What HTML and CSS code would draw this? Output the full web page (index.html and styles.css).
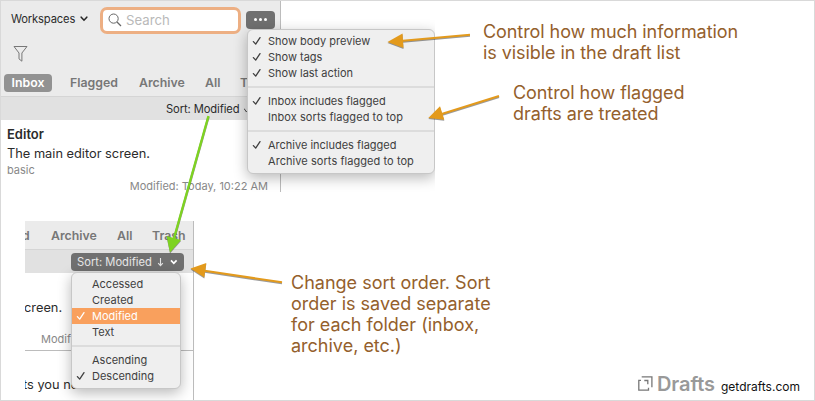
FILE: index.html
```html
<!DOCTYPE html>
<html lang="en">
<head>
<meta charset="utf-8">
<title>Draft list options</title>
<link rel="stylesheet" href="styles.css">
</head>
<body>
<svg class="defs" width="0" height="0"><symbol id="check" viewBox="0 0 10 10"><path d="M1.4 5.6 3.7 8.1 8 1.6" fill="none" stroke="currentColor" stroke-width="1.3" stroke-linecap="round" stroke-linejoin="round"/></symbol></svg>
<main class="canvas">
  <section class="shot shot-list">
    <div class="pane">
      <header class="toolbar">
        <span class="workspaces">Workspaces</span>
        <svg class="chevron" width="8" height="6" viewBox="0 0 8 6"><path d="M1.2 1.2 4 4.2 6.8 1.2" fill="none" stroke="#262626" stroke-width="1.6" stroke-linecap="round"/></svg>
        <div class="search"><svg width="14" height="14" viewBox="0 0 14 14" fill="none" stroke="#666"><circle cx="5.6" cy="5.6" r="4.6"/><path d="m9 9 4 4" stroke-width="1.3"/></svg><span>Search</span></div>
        <span class="more"><i></i><i></i><i></i></span>
      </header>
      <div class="filter"><svg width="15" height="18" viewBox="0 0 15 18"><path d="M1 1.5h13L8.9 8v8.2L6 13.9V8Z" fill="none" stroke="#777"/></svg></div>
      <nav class="tabs"><b class="active">Inbox</b><b class="t-flagged">Flagged</b><b class="t-archive">Archive</b><b class="t-all">All</b><b class="t-trash">Trash</b></nav>
      <div class="sortbar"><span>Sort: Modified</span><svg width="6" height="8" viewBox="0 0 6 8"><path d="M0 3.5 2.5 7 5 3.5" fill="none" stroke="#444"/></svg></div>
      <article class="draft"><h2>Editor</h2><p class="preview">The main editor screen.</p><p class="tag">basic</p><p class="date">Modified: Today, 10:22 AM</p></article>
    </div>
    <div class="menu menu-display">
      <div class="item"><svg><use href="#check"/></svg><span>Show body preview</span></div>
      <div class="item"><svg><use href="#check"/></svg><span>Show tags</span></div>
      <div class="item"><svg><use href="#check"/></svg><span>Show last action</span></div>
      <hr>
      <div class="item"><svg><use href="#check"/></svg><span>Inbox includes flagged</span></div>
      <div class="item"><span class="wide">Inbox sorts flagged to top</span></div>
      <hr>
      <div class="item"><svg><use href="#check"/></svg><span>Archive includes flagged</span></div>
      <div class="item"><span class="wide">Archive sorts flagged to top</span></div>
    </div>
  </section>

  <section class="shot shot-sort">
    <div class="pane">
      <nav class="tabs"><b class="cut">d</b><b class="t-archive">Archive</b><b class="t-all">All</b><b class="t-trash">Trash</b></nav>
      <div class="sortbar"><div class="sort-button"><span>Sort: Modified</span><svg width="24" height="12" viewBox="0 0 24 12" fill="none" stroke="#e4e4e4"><path d="M5.5 2v7.5M3.2 7.2l2.3 2.5 2.3-2.5" stroke-width="1.1"/><path d="m16 4.4 2.8 2.9 2.8-2.9" stroke="#fff" stroke-width="1.7"/></svg></div></div>
      <article class="under under-top"><p class="preview">creen.</p><p class="date">Modified</p></article>
      <article class="under"><p class="preview">ts you need.</p></article>
    </div>
    <div class="menu menu-sort">
      <div class="item"><span>Accessed</span></div>
      <div class="item"><span>Created</span></div>
      <div class="item selected"><svg><use href="#check"/></svg><span>Modified</span></div>
      <div class="item"><span>Text</span></div>
      <hr>
      <div class="item"><span>Ascending</span></div>
      <div class="item"><svg><use href="#check"/></svg><span>Descending</span></div>
    </div>
  </section>

  <p class="note note-info">Control how much information<br>is visible in the draft list</p>
  <p class="note note-flag">Control how flagged<br>drafts are treated</p>
  <p class="note note-sort">Change sort order. Sort<br>order is saved separate<br>for each folder (inbox,<br>archive, etc.)</p>

  <svg class="arrows" width="815" height="401" viewBox="0 0 815 401">
    <g stroke="#e39a1c" fill="#e39a1c" stroke-width="2">
      <path d="M470 34.8 400 41"/><path d="m387.5 42 15-8.5 1 14.5Z" stroke="none"/>
      <path d="M499 96 440 114.5"/><path d="m428.3 118 11.7-11.8 4.3 13.5Z" stroke="none"/>
      <path d="M282 282.3 203 270.5"/><path d="m190.5 268.5 15.8-5.5-2 14.6Z" stroke="none"/>
    </g>
    <path d="M208.5 116 173.5 240" stroke="#7ed321" stroke-width="2.4"/><path d="m170 252.5-3.4-16.5 14.4 4Z" fill="#7ed321"/>
  </svg>

  <footer class="brand"><svg width="15" height="15" viewBox="0 0 15 15" fill="none" stroke="#777"><path d="M3.7.8h10.2v10.4M6.3 4.5h3.5v3.7" stroke-width="1.3"/><path d="M3 4.3H.8v9.8h9.7v-2.4" stroke-width="1.3"/></svg><span class="name">Drafts</span><span class="site">getdrafts.com</span></footer>
</main>
</body>
</html>
```
FILE: styles.css
```css
* { box-sizing: border-box; }
body { margin: 0; background: #fff; font-family: Inter, "Liberation Sans", sans-serif; color: #2b2b2b; }
h2, p { margin: 0; }
.defs { position: absolute; }
.canvas { position: relative; width: 815px; height: 401px; border: 1px solid #d9d9d9; overflow: hidden; white-space: nowrap; }

.shot { position: absolute; overflow: hidden; background: #fff; }
.shot-list { left: 0; top: 0; width: 434px; height: 191px; }
.shot-sort { left: 24px; top: 220px; width: 180px; height: 179px; }
.pane { height: 100%; background: #fff; border-right: 1px solid #bcbcbc; overflow: hidden; }
.shot-list .pane { width: 280px; }
.shot-sort .pane { width: 169px; }

.toolbar { display: flex; align-items: center; height: 36px; background: #ebebeb; padding-left: 10px; }
.toolbar > * { flex: none; }
.workspaces { width: 63px; font-size: 11.2px; letter-spacing: -.15px; }
.chevron { margin-left: 6px; }
.search { display: flex; align-items: center; gap: 4px; width: 141px; height: 27px; margin: 2px 0 0 12px; padding-left: 5px; border: 3px solid #edaf83; border-radius: 7px; background: #fff; color: #b9b9b9; font-size: 13.2px; }
.more { display: flex; justify-content: center; align-items: center; gap: 2px; width: 29px; height: 18px; margin: 1px 0 0 5px; border-radius: 4px; background: #707070; }
.more i { width: 3px; height: 3px; border-radius: 50%; background: #fff; }
.filter { height: 34px; padding: 8px 0 0 12px; background: #ebebeb; }

.tabs { display: flex; align-items: center; background: #ebebeb; color: #777; font-size: 12.3px; border-bottom: 1px solid #d5d5d5; }
.shot-list .tabs { height: 26px; padding: 0 0 2px 3px; }
.tabs b { font-weight: 600; flex: none; }
.tabs .active { width: 48px; height: 18px; line-height: 18px; margin-right: 18px; text-align: center; color: #fff; background: #929292; border-radius: 4px; }
.t-flagged { width: 69px; }
.t-archive { width: 66px; }
.t-all { width: 35px; }
.sortbar { background: #e1e1e1; font-size: 11.2px; }
.shot-list .sortbar { display: flex; align-items: center; gap: 4px; height: 23px; padding-left: 165px; letter-spacing: -.1px; }
.draft { padding: 5px 12px 0 6px; }
.draft h2 { font-size: 13px; font-weight: 600; line-height: 19px; }
.preview { font-size: 12.8px; line-height: 18px; }
.draft .preview { line-height: 19px; }
.tag { color: #888; font-size: 11px; line-height: 15px; }
.date { color: #888; font-size: 11px; line-height: 17px; text-align: right; }

.menu { position: absolute; background: #efefef; border: 1px solid #c7c7c7; border-radius: 6px; box-shadow: 0 4px 14px rgba(0,0,0,.28); color: #404040; font-size: 11px; letter-spacing: -.01px; }
.menu-display { left: 246px; top: 28px; width: 188px; height: 145px; padding-top: 3px; }
.menu-sort { left: 46px; top: 51px; width: 110px; height: 117px; padding-top: 3px; }
.item { display: flex; align-items: center; height: 16px; padding-left: 20px; }
.item svg { width: 10px; height: 10px; margin-left: -16px; margin-right: 6px; }
.item .wide { letter-spacing: .06px; }
.menu hr { height: 2px; margin: 5px 0; border: 0; background: #dcdcdc; }
.selected { background: #f9a05d; color: #fff; }

.shot-sort .tabs { height: 29px; }
.shot-sort .cut { width: 29px; margin-left: -3px; }
.shot-sort .sortbar { height: 23px; padding: 3px 0 0 46px; }
.sort-button { display: flex; align-items: center; width: 113px; height: 18px; padding-left: 6px; border-radius: 4px; background: #707070; color: #e7e7e7; }
.sort-button svg { margin-left: 3px; }
.under-top { height: 78px; padding-top: 26px; border-bottom: 1px solid #bcbcbc; }
.under-top .preview { margin-left: -1px; }
.under-top .date { text-align: left; margin: 14px 0 0 16px; }
.under:last-child { padding-top: 25px; }
.under:last-child .preview { margin-left: -2px; }

.note { position: absolute; color: #94602c; font-size: 18px; line-height: 21px; letter-spacing: -.07px; }
.note-info { left: 482px; top: 20px; }
.note-flag { left: 512px; top: 81px; }
.note-sort { left: 290px; top: 271px; letter-spacing: 0; }
.arrows { position: absolute; left: -1px; top: -1px; filter: drop-shadow(0 1px .6px rgba(0,0,0,.4)); }
.brand { position: absolute; left: 637px; top: 371px; height: 24px; display: flex; align-items: baseline; }
.brand svg { margin-right: 4px; }
.name { color: #999; font-size: 20px; font-weight: 600; letter-spacing: -.1px; width: 64px; }
.site { color: #111; font-size: 12px; }
```
